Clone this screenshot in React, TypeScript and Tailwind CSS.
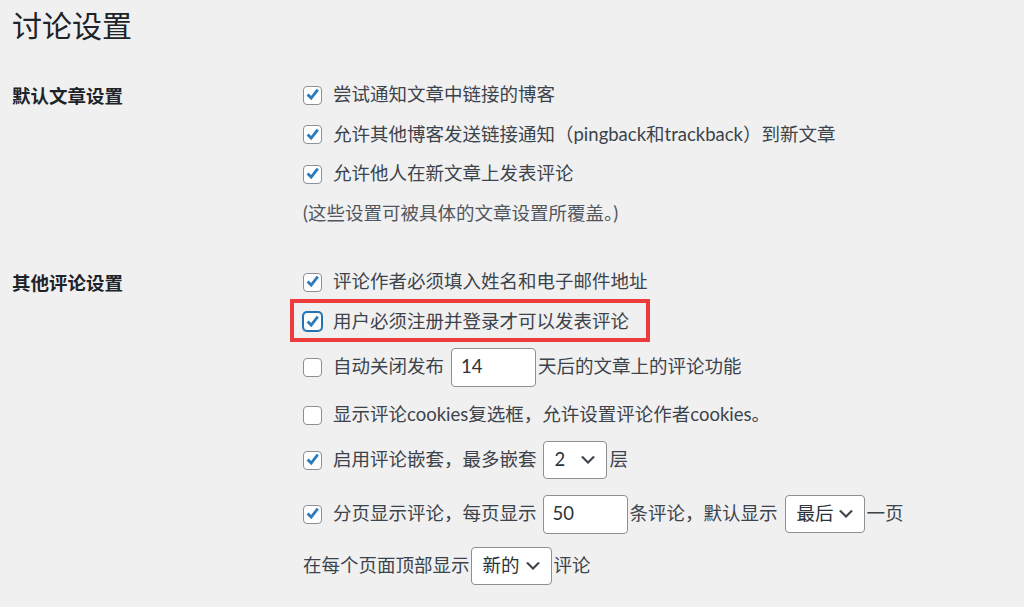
import React from "react";

const Check = () => (
  <svg viewBox="0 0 19 19" className="absolute left-[-1.5px] top-[-1.5px] w-[19px] h-[19px]">
    <path d="M4.6 9.4l3.6 3.7 6.6-8.4" fill="none" stroke="#2b7bbf" strokeWidth="2.8" strokeLinejoin="miter" />
  </svg>
);

const Box = ({ checked, focus }: { checked?: boolean; focus?: boolean }) => (
  <span
    className={
      focus
        ? "relative shrink-0 w-[19px] h-[19px] rounded-[4px] border-[1.5px] border-[#2271b1] shadow-[0_0_0_1px_#2271b1] bg-white"
        : "relative shrink-0 w-[19px] h-[19px] rounded-[4px] border-[1.5px] border-[#8c8f94] bg-white"
    }
  >
    {checked && <Check />}
  </span>
);

const Chevron = () => (
  <svg viewBox="0 0 20 20" className="ml-auto w-[20px] h-[20px] shrink-0">
    <path d="M5 6l5 5 5-5 2 1-7 7-7-7z" fill="#3c434a" />
  </svg>
);

const Select = ({ value, w }: { value: string; w: string }) => (
  <span
    className={`flex items-center h-[38px] ${w} rounded-[4px] border-[1.5px] border-[#8c8f94] bg-white pl-[11px] pr-[8px] text-[#2c3338]`}
  >
    {value}
    <Chevron />
  </span>
);

const Input = ({ value }: { value: string }) => (
  <span className="flex items-center h-[39px] w-[85px] rounded-[4px] border-[1.5px] border-[#8c8f94] bg-white pl-[9px] text-[#2c3338]">
    {value}
  </span>
);

export default function App() {
  return (
    <div
      className="min-h-[607px] bg-[#f0f0f1] pl-[12px] text-[18.5px] text-[#3c434a]"
      style={{ fontFamily: '"Lato", "Noto Sans CJK SC", sans-serif' }}
    >
      <h1 className="pt-[10px] text-[30px] leading-[30px] font-normal text-[#1d2327]">讨论设置</h1>

      {/* 默认文章设置 */}
      <div className="mt-[35px] grid grid-cols-[291px_1fr]">
        <div className="h-[40px] flex items-center pt-[3px] font-bold text-[#1d2327]">默认文章设置</div>
        <div className="flex flex-col">
          <div className="h-[40px] flex items-center gap-[11px]">
            <Box checked />
            <span>尝试通知文章中链接的博客</span>
          </div>
          <div className="h-[39px] flex items-center gap-[11px]">
            <Box checked />
            <span>允许其他博客发送链接通知（pingback和trackback）到新文章</span>
          </div>
          <div className="h-[40px] flex items-center gap-[11px]">
            <Box checked />
            <span>允许他人在新文章上发表评论</span>
          </div>
          <div className="h-[39px] flex items-center text-[#50575e]">(这些设置可被具体的文章设置所覆盖。)</div>
        </div>
      </div>

      {/* 其他评论设置 */}
      <div className="mt-[29px] grid grid-cols-[291px_1fr]">
        <div className="h-[40px] flex items-center pt-[3px] font-bold text-[#1d2327]">其他评论设置</div>
        <div className="flex flex-col">
          <div className="h-[40px] flex items-center gap-[11px]">
            <Box checked />
            <span>评论作者必须填入姓名和电子邮件地址</span>
          </div>
          <div className="relative h-[39px] flex items-center gap-[11px]">
            <Box checked focus />
            <span>用户必须注册并登录才可以发表评论</span>
            <span className="absolute left-[-13px] top-[-3px] w-[360px] h-[43px] border-[4px] border-[#ee3b3b]" />
          </div>
          <div className="h-[52px] flex items-center">
            <Box />
            <span className="ml-[11px]">自动关闭发布</span>
            <span className="ml-[7px]">
              <Input value="14" />
            </span>
            <span className="ml-[2px]">天后的文章上的评论功能</span>
          </div>
          <div className="h-[44px] flex items-center gap-[11px]">
            <Box />
            <span>显示评论cookies复选框，允许设置评论作者cookies。</span>
          </div>
          <div className="h-[46px] flex items-center">
            <Box checked />
            <span className="ml-[11px]">启用评论嵌套，最多嵌套</span>
            <span className="ml-[6px]">
              <Select value="2" w="w-[64px]" />
            </span>
            <span className="ml-[3px]">层</span>
          </div>
          <div className="h-[62px] flex items-center">
            <Box checked />
            <span className="ml-[11px]">分页显示评论，每页显示</span>
            <span className="ml-[6px]">
              <Input value="50" />
            </span>
            <span className="ml-[2px]">条评论，默认显示</span>
            <span className="ml-[7px]">
              <Select value="最后" w="w-[80px]" />
            </span>
            <span className="ml-[2px]">一页</span>
          </div>
          <div className="h-[42px] flex items-center">
            <span>在每个页面顶部显示</span>
            <span className="ml-[1px]">
              <Select value="新的" w="w-[81px]" />
            </span>
            <span className="ml-[2px]">评论</span>
          </div>
        </div>
      </div>
    </div>
  );
}
